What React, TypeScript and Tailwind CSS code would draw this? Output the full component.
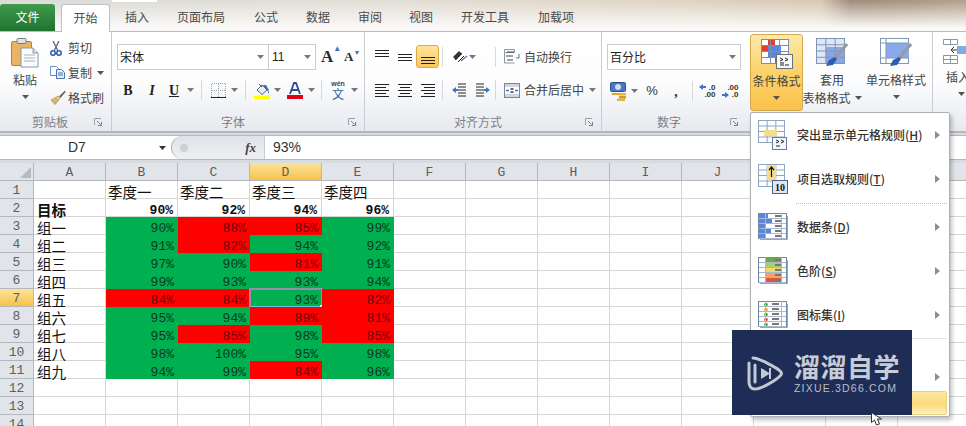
import React from "react";

const Arrow = ({ c = "#555" }: { c?: string }) => (
  <svg width="7" height="4" viewBox="0 0 7 4" className="block shrink-0"><path d="M0 0h7L3.5 4z" fill={c} /></svg>
);

const Sep = () => <div className="w-px h-[20px] bg-[#d5d9de]" />;

const Launcher = () => (
  <svg width="9" height="9" viewBox="0 0 9 9" className="block shrink-0">
    <path d="M0.5 7V0.5H7" fill="none" stroke="#9aa0a8" />
    <path d="M3 3l3.5 3.5M7.5 4v3.5H4" fill="none" stroke="#6f7e90" />
  </svg>
);

const Lines = ({ rows, w = 16 }: { rows: [number, number, number][]; w?: number }) => (
  <svg width={w} height="18" viewBox={`0 0 ${w} 18`} className="block">
    {rows.map(([x, y, l], i) => (
      <rect key={i} x={x} y={y} width={l} height="1" fill="#222" />
    ))}
  </svg>
);

const Paste = () => (
  <svg width="28" height="31" viewBox="0 0 28 31" className="block">
    <rect x="0.5" y="4.5" width="20" height="24" rx="1.5" fill="#e9b565" stroke="#a98446" />
    <rect x="6" y="1.5" width="9" height="5" rx="1" fill="#dfe3e8" stroke="#7d7d7d" />
    <path d="M10 11h12l5 5v14H10z" fill="#fbfbfd" stroke="#8b96a5" />
    <path d="M22 11v5h5" fill="#dde3ea" stroke="#8b96a5" />
    <path d="M13 18h11M13 21h11M13 24h11" stroke="#aab3bf" />
  </svg>
);
const Scissors = () => (
  <svg width="12" height="15" viewBox="0 0 12 15" className="block">
    <path d="M3 0l5 10M9 0L4 10" stroke="#5f6e86" strokeWidth="1.4" fill="none" />
    <circle cx="3" cy="12" r="2.2" fill="none" stroke="#2c5fb0" strokeWidth="1.6" />
    <circle cx="9" cy="12" r="2.2" fill="none" stroke="#2c5fb0" strokeWidth="1.6" />
  </svg>
);
const CopyIcon = () => (
  <svg width="15" height="13" viewBox="0 0 15 13" className="block">
    <path d="M0.5 0.5h6l2 2v7h-8z" fill="#fff" stroke="#6b8fc0" />
    <path d="M6.5 3.5h5l3 3v6h-8z" fill="#e4edf8" stroke="#4a76b0" />
    <path d="M8 7h5M8 9h5" stroke="#4a76b0" />
  </svg>
);
const Brush = () => (
  <svg width="16" height="15" viewBox="0 0 16 15" className="block">
    <path d="M15 0.5l-6 6 1.5 1.5 5-6z" fill="#6b5b4a" />
    <path d="M8.5 6L1 10l4 4.5 5.5-7z" fill="#e8c77a" stroke="#9c8246" strokeWidth="0.7" />
    <path d="M3 10l3 3M5 8.5l3 3" stroke="#9c8246" strokeWidth="0.7" />
  </svg>
);
const Borders = () => (
  <svg width="15" height="15" viewBox="0 0 15 15" className="block">
    <path d="M1 .5h13M.5 1v13M14.5 1v13M7.5 1v13M1 7.5h13" stroke="#9ca3ad" strokeDasharray="1 1" fill="none" />
    <path d="M0 14.5h15" stroke="#222" />
  </svg>
);
const Fill = () => (
  <svg width="17" height="17" viewBox="0 0 17 17" className="block">
    <path d="M3 8l5-5 5 5-5 4.500z" fill="#e8ecf2" stroke="#5c6470" />
    <path d="M5 2l3 3" stroke="#5c6470" />
    <path d="M9 3h3l3 5-2 1z" fill="#3d6fb5" />
    <path d="M14 8c1 1.500 1.500 3 .8 3.500-.8-.5-1.200-2-.8-3.500z" fill="#3d6fb5" />
    <rect x="0" y="13.500" width="16" height="3.500" fill="#ffff00" />
  </svg>
);
const FontColor = () => (
  <svg width="16" height="17" viewBox="0 0 16 17" className="block">
    <path d="M3 12L7 1h2l4 11M5 8h6" fill="none" stroke="#2a4f8f" strokeWidth="1.800" />
    <rect y="13" width="16" height="4" fill="#e00010" />
  </svg>
);
const Orient = () => (
  <svg width="16" height="15" viewBox="0 0 16 15" className="block">
    <path d="M1 8l6-6 3 3-6 6z" fill="#333" />
    <path d="M3 11l7-7M6 13l6-6" stroke="#222" />
    <path d="M9 12l6-5" stroke="#5579ad" strokeWidth="1.300" />
  </svg>
);
const Indent = ({ flip }: { flip?: boolean }) => (
  <svg width="15" height="15" viewBox="0 0 15 15" className={flip ? "block -scale-x-100" : "block"}>
    <path d="M6 1h8M6 4h8M6 7h8M6 10h8M6 13h8" stroke="#222" />
    <path d="M0 7l4-3v2h2v2H4v2z" fill="#3f72c0" />
  </svg>
);
const Wrap = () => (
  <svg width="16" height="15" viewBox="0 0 16 15" className="block">
    <path d="M.5 .5h10v3H.5zM.5 4v10h10" fill="#fff" stroke="#8a94a2" />
    <path d="M3 3h7M3 11h6M2 7h7" stroke="#444" />
    <path d="M15 5v4h-3" fill="none" stroke="#3f72c0" />
  </svg>
);
const Merge = () => (
  <svg width="16" height="15" viewBox="0 0 16 15" className="block">
    <rect x=".5" y=".5" width="15" height="14" fill="#cdd6e2" stroke="#7b8796" />
    <rect x="1" y="4" width="14" height="7" fill="#fff" />
    <path d="M2 7.500h3M11 7.500h3" stroke="#3f72c0" strokeWidth="1.500" />
    <path d="M6.500 6h3M6.500 9h3" stroke="#333" strokeWidth="1.500" />
  </svg>
);
const Money = () => (
  <svg width="17" height="19" viewBox="0 0 17 19" className="block">
    <rect x="0.500" y="0.500" width="15" height="9" rx="1" fill="#4a78c0" stroke="#2f538f" />
    <ellipse cx="8" cy="5" rx="3" ry="3" fill="#cfe0f5" />
    <rect x="2" y="11" width="7" height="2" fill="#dba52c" />
    <rect x="9" y="11" width="7" height="2.500" fill="#e3b33c" />
    <rect x="9" y="14" width="7" height="2.500" fill="#cf9a25" />
    <rect x="7" y="16.500" width="8" height="2.500" fill="#e3b33c" />
  </svg>
);
const Decimal = ({ inc }: { inc?: boolean }) => (
  <div className="relative w-[17px] h-[15px] font-['Liberation_Sans',sans-serif] font-bold text-[8px] leading-[7px] text-[#333] text-right">
    <div>{inc ? ".00" : ".0"}</div>
    <div>{inc ? ".0" : ".00"}</div>
    <svg width="7" height="6" viewBox="0 0 7 6" className={inc ? "absolute left-0 top-[8px]" : "absolute left-0 top-0"}>
      <path d={inc ? "M7 3L3 0v2H0v2h3v2z" : "M0 3l4-3v2h3v2H4v2z"} fill="#3f72c0" />
    </svg>
  </div>
);

const TableGrid = ({ x = 0, y = 0, w = 27, h = 24, c = "#8aa0bd", bg = "#fff" }: any) => (
  <g>
    <rect x={x + 0.5} y={y + 0.5} width={w} height={h} fill={bg} stroke={c} />
    {[1, 2, 3].map((i) => (
      <path key={"v" + i} d={`M${x + 0.5 + (w * i) / 3} ${y}v${h}`} stroke={c} />
    ))}
    {[1, 2, 3].map((i) => (
      <path key={"h" + i} d={`M${x} ${y + 0.5 + (h * i) / 4}h${w}`} stroke={c} />
    ))}
  </g>
);

const CondFormat = () => (
  <svg width="32" height="30" viewBox="0 0 32 30" className="block">
    <rect x=".5" y=".5" width="27" height="24" fill="#fff" />
    <rect x="7" y="1" width="7" height="6" fill="#e2402c" />
    <rect x="7" y="7" width="13" height="11" fill="#5c86dc" />
    <rect x="1" y="7" width="6" height="6" fill="#e2402c" />
    <rect x="14" y="18" width="6" height="6" fill="#e2402c" />
    <TableGrid c="#7d8fa8" bg="none" />
    <rect x="15.500" y="15.500" width="16" height="14" fill="#f8f8fa" stroke="#6b6f78" />
    <path d="M19 19l3 1.500-3 1.500M19 24h4M24 19l3 1.500-3 1.500M24 26h4M19 26h4" fill="none" stroke="#222" />
  </svg>
);
const TableStyle = () => (
  <svg width="32" height="30" viewBox="0 0 32 30" className="block">
    <rect x=".5" y=".5" width="28" height="25" fill="#dfe6f5" />
    <rect x="10" y="9" width="19" height="16" fill="#8aa6e4" />
    <TableGrid w={28} h={25} c="#8096b4" bg="none" />
    <path d="M31 6L19 20" stroke="#9a9a9a" strokeWidth="3" />
    <path d="M19 19l-6 3-3 6 7-1 4-6z" fill="#2d5cb4" />
  </svg>
);
const CellStyle = () => (
  <svg width="32" height="30" viewBox="0 0 32 30" className="block">
    <rect x=".5" y=".5" width="28" height="25" fill="#fff" stroke="#8096b4" />
    <rect x="6" y="5" width="23" height="15" fill="#8aa8ea" />
    <path d="M6 0v26M0 5h29M0 20h29" stroke="#8096b4" />
    <path d="M31 6L19 20" stroke="#9a9a9a" strokeWidth="3" />
    <path d="M19 19l-6 3-3 6 7-1 4-6z" fill="#2d5cb4" />
  </svg>
);
const InsertIcon = () => (
  <svg width="24" height="26" viewBox="0 0 24 26" className="block shrink-0">
    <path d="M.5 .5h14v5h-14zM7.500 .5v5M.5 16.500h14v8h-14zM.5 20.500h14M7.500 16.500v8" fill="#fff" stroke="#8a96a6" />
    <rect x="14" y="7" width="10" height="8" fill="#86a8e8" />
    <path d="M14 11H8M11 8l-3 3 3 3" fill="none" stroke="#333" />
  </svg>
);

const MenuRule = ({ variant }: { variant: number }) => {
  if (variant === 0)
    return (
      <svg width="30" height="30" viewBox="0 0 30 30" className="block">
        <TableGrid w={26} h={22} c="#8ea6c4" />
        <rect x="6" y="10" width="13" height="6" fill="#f3dc8a" />
        <rect x="14.500" y="17.500" width="14" height="12" fill="#f4f6f9" stroke="#657da0" />
        <path d="M18 20l3 1.500-3 1.500M18 26h4M23 20l3 1.500-3 1.500" fill="none" stroke="#222" />
      </svg>
    );
  if (variant === 1)
    return (
      <svg width="30" height="30" viewBox="0 0 30 30" className="block">
        <TableGrid w={26} h={22} c="#8ea6c4" />
        <rect x="9" y="1" width="9" height="15" fill="#f3dc8a" />
        <path d="M13.500 13V3M11 6l2.500-3L16 6" fill="none" stroke="#111" strokeWidth="1.200" />
        <rect x="14.500" y="16.500" width="15" height="13" fill="#dfe6f0" stroke="#4d6484" />
        <text x="22" y="27" fontSize="10" fontWeight="700" textAnchor="middle" fontFamily="Liberation Serif" fill="#111">10</text>
      </svg>
    );
  const bars = variant === 2;
  const colours = ["#6aa84f", "#a8cf6a", "#f2d86a", "#f3a45a", "#d9554a"];
  return (
    <svg width="30" height="28" viewBox="0 0 30 28" className="block">
      <rect x=".5" y=".5" width="28" height="25" fill="#fff" stroke="#6f87a8" />
      {[0, 1, 2, 3, 4].map((i) => (
        <g key={i}>
          {bars && <rect x="1" y={1 + i * 5} width={[9, 13, 7, 12, 6][i]} height="4" fill="#5c86dc" />}
          {variant === 3 && <rect x="8" y={1 + i * 5} width="15" height="5" fill={colours[i]} />}
          {variant === 4 && <circle cx="8" cy={3.500 + i * 5} r="1.800" fill={["#2fa84f", "#e8a52c", "#2fa84f", "#d9463a", "#2fa84f"][i]} />}
          <rect x={variant === 4 ? 14 : 17} y={2 + i * 5} width="7" height="2" fill="#777" />
          <path d={`M1 ${5.500 + i * 5}h27`} stroke="#a9b8cc" />
        </g>
      ))}
      <path d="M7.500 0v26M23.500 0v26" stroke="#a9b8cc" />
      <path d="M2 26.500h27.500V3" fill="none" stroke="#9aa6b6" />
    </svg>
  );
};

const MenuArrow = () => (
  <svg width="5" height="8" viewBox="0 0 5 8" className="block shrink-0"><path d="M0 0l5 4-5 4z" fill="#8a8f96" /></svg>
);

const MenuItem = ({ v, label, k }: { v: number; label: string; k: string }) => (
  <div className="h-[44px] flex items-center pl-[7px] pr-[9px] shrink-0">
    <div className="w-[31px] h-[30px] flex items-center shrink-0"><MenuRule variant={v} /></div>
    <div className="ml-[8px] flex-1 text-[12px] font-medium text-[#333] whitespace-nowrap">
      {label}(<span className="underline">{k}</span>)
    </div>
    <MenuArrow />
  </div>
);

const GroupLabel = ({ text, cls }: { text: string; cls: string }) => (
  <div className={`h-[20px] pt-[2px] flex items-center text-[12px] text-[#7c8087] ${cls}`}>
    <div className="flex-1 text-center">{text}</div>
    <Launcher />
  </div>
);

const Tab = ({ t, cls }: { t: string; cls: string }) => (
  <div className={`h-full pb-[1px] flex items-center justify-center text-[12px] text-[#4a4a4a] ${cls}`}>{t}</div>
);

const cols = ["B", "C", "D", "E"];
const data: [string, number[]][] = [
  ["组一", [90, 88, 85, 99]],
  ["组二", [91, 82, 94, 92]],
  ["组三", [97, 90, 81, 91]],
  ["组四", [99, 93, 93, 94]],
  ["组五", [84, 84, 93, 82]],
  ["组六", [95, 94, 89, 81]],
  ["组七", [95, 85, 98, 85]],
  ["组八", [98, 100, 95, 98]],
  ["组九", [94, 99, 84, 96]],
];
const letters = ["A", "B", "C", "D", "E", "F", "G", "H", "I", "J", "K", "L", "M"];

const Cell = ({ children, cls = "" }: { children?: React.ReactNode; cls?: string }) => (
  <div className={`border-r border-b border-[#d6d6d6] overflow-visible whitespace-nowrap leading-[21px] ${cls}`}>{children}</div>
);
const RowHead = ({ n }: { n: number }) => (
  <div className={`border-r border-b border-[#b4b8be] text-center text-[13px] leading-[20px] font-['Liberation_Mono',monospace] text-[#5e5e5e] ${n === 7 ? "bg-gradient-to-b from-[#fbe39a] to-[#f7c244]" : "bg-[#e1e4e8]"}`}>{n}</div>
);
const Empty = ({ n }: { n: number }) => (
  <>
    {Array.from({ length: n }).map((_, i) => <Cell key={i} />)}
  </>
);

const pct = "font-['Liberation_Mono',monospace] text-[13px] leading-[23px] text-right pr-[4px]";

export default function App() {
  return (
    <div className="relative w-[966px] h-[426px] overflow-hidden bg-white font-['Noto_Sans_CJK_SC','Liberation_Sans',sans-serif] flex flex-col">
      {/* title + tabs */}
      <div className="relative h-[32px] shrink-0 flex items-end pt-[4px] border-b border-[#b9bdc3] bg-[linear-gradient(180deg,rgba(250,249,247,0)_5%,rgba(250,249,247,0.55)_50%,#faf9f8_90%),linear-gradient(90deg,#dcdcd8_0%,#e2dfd6_40%,#dfd5c4_70%,#d8c9b4_85%,#a49080_88%,#a8937f_92%,#b5a391_100%)]">
        <div className="absolute left-[112px] top-0 w-[45px] h-[2px] bg-white" />
        <div className="w-[55px] h-[27px] pb-[1px] rounded-t-[3px] bg-gradient-to-b from-[#3f9a4c] to-[#1f7330] text-white text-[12px] flex items-center justify-center">文件</div>
        <div className="w-[6px]" />
        <div className="w-[49px] h-[28px] pb-[1px] -mb-px rounded-t-[3px] bg-white border border-b-0 border-[#bcc0c6] flex items-center justify-center text-[12px] text-[#4a4a4a]">开始</div>
        <div className="h-[27px] flex">
          <Tab t="插入" cls="w-[54px]" />
          <Tab t="页面布局" cls="w-[74px]" />
          <Tab t="公式" cls="w-[56px]" />
          <Tab t="数据" cls="w-[48px]" />
          <Tab t="审阅" cls="w-[56px]" />
          <Tab t="视图" cls="w-[46px]" />
          <Tab t="开发工具" cls="w-[82px]" />
          <Tab t="加载项" cls="w-[60px]" />
        </div>
      </div>

      {/* ribbon */}
      <div className="h-[101px] shrink-0 flex border-b-2 border-[#b4b8be] bg-gradient-to-b from-white via-[#fdfdfe] to-[#e6e9ee] text-[12px] text-[#444]">
        {/* clipboard */}
        <div className="w-[112px] shrink-0 flex flex-col border-r border-[#c9cdd3]">
          <div className="flex-1 flex pl-[11px]">
            <div className="w-[28px] flex flex-col items-center pt-[5px]">
              <Paste />
              <div className="mt-[3px] leading-[18px]">粘贴</div>
              <div className="mt-[6px]"><Arrow /></div>
            </div>
            <div className="ml-[11px] flex flex-col pt-[4px]">
              <div className="h-[24px] flex items-center"><div className="w-[18px]"><Scissors /></div>剪切</div>
              <div className="h-[25px] flex items-center"><div className="w-[18px]"><CopyIcon /></div>复制<div className="ml-[5px]"><Arrow /></div></div>
              <div className="h-[25px] flex items-center"><div className="w-[18px]"><Brush /></div>格式刷</div>
            </div>
          </div>
          <GroupLabel text="剪贴板" cls="pl-[6px] pr-[8px]" />
        </div>

        {/* font */}
        <div className="w-[253px] shrink-0 flex flex-col border-r border-[#c9cdd3]">
          <div className="flex-1 pt-[12px] pl-[5px]">
            <div className="h-[26px] flex items-center">
              <div className="w-[152px] h-full pb-[1px] bg-white border border-[#c9cdd3] flex items-center pl-[2px] pr-[4px] text-[#222]"><div className="flex-1">宋体</div><Arrow c="#777" /></div>
              <div className="w-[47px] h-full pb-[1px] bg-white border border-l-0 border-[#c9cdd3] flex items-center pl-[3px] pr-[4px] font-['Liberation_Sans',sans-serif] text-[#222]"><div className="flex-1">11</div><Arrow c="#777" /></div>
              <div className="ml-[5px] w-[20px] font-['Liberation_Serif',serif] font-bold text-[17px] text-[#2a2a2a] flex">A<span className="text-[8px] leading-[9px] text-[#3f72c0]">▲</span></div>
              <div className="ml-[3px] w-[20px] font-['Liberation_Serif',serif] font-bold text-[13px] text-[#2a2a2a] flex items-end">A<span className="text-[7px] leading-[12px] self-start text-[#3f72c0]">▼</span></div>
            </div>
            <div className="-ml-[1px] mt-[9px] h-[22px] flex items-center">
              <div className="w-[24px] text-center font-['Liberation_Serif',serif] font-bold text-[14px] text-[#222]">B</div>
              <div className="w-[24px] text-center font-['Liberation_Serif',serif] font-bold italic text-[14px] text-[#222]">I</div>
              <div className="w-[20px] text-center font-['Liberation_Serif',serif] font-bold underline text-[14px] text-[#222]">U</div>
              <div className="w-[12px] flex justify-center"><Arrow c="#777" /></div>
              <div className="w-[10px] flex justify-center"><Sep /></div>
              <div className="w-[24px] flex justify-center"><Borders /></div>
              <div className="w-[8px] flex justify-center"><Arrow c="#777" /></div>
              <div className="w-[14px] flex justify-center"><Sep /></div>
              <div className="w-[20px] flex justify-center"><Fill /></div>
              <div className="w-[10px] flex justify-center"><Arrow c="#777" /></div>
              <div className="w-[26px] flex justify-center"><FontColor /></div>
              <div className="w-[6px] flex justify-center"><Arrow c="#777" /></div>
              <div className="w-[14px] flex justify-center"><Sep /></div>
              <div className="w-[20px] h-[20px] flex flex-col items-center text-[#2c5fa8]">
                <span className="h-[7px] text-[7px] leading-[7px] font-bold text-[#444] font-['Liberation_Sans',sans-serif]">wén</span>
                <span className="h-[13px] text-[12px] leading-[13px]">文</span>
              </div>
              <div className="w-[12px] flex justify-center"><Arrow c="#777" /></div>
            </div>
          </div>
          <GroupLabel text="字体" cls="pl-[6px] pr-[7px]" />
        </div>

        {/* alignment */}
        <div className="w-[237px] shrink-0 flex flex-col border-r border-[#c9cdd3]">
          <div className="flex-1 pt-[13px] pl-[5px]">
            <div className="h-[23px] flex items-center">
              <div className="w-[23px] flex justify-center"><Lines rows={[[1, 2, 14], [1, 5, 14], [1, 8, 14]]} /></div>
              <div className="w-[23px] flex justify-center"><Lines rows={[[1, 6, 14], [1, 9, 14], [1, 12, 14]]} /></div>
              <div className="w-[23px] h-[23px] flex justify-center items-center rounded-[3px] border border-[#d9a94a] bg-gradient-to-b from-[#fde49a] to-[#fbc85a]"><Lines rows={[[1, 9, 14], [1, 12, 14], [1, 15, 14]]} /></div>
              <div className="w-[6px] flex justify-center"><Sep /></div>
              <div className="w-[50px] pl-[7px] flex items-center gap-[1px]"><Orient /><Arrow c="#777" /></div>
              <div className="w-[9px] flex"><Sep /></div>
              <div className="w-[20px]"><Wrap /></div>
              <div className="text-[#444]">自动换行</div>
            </div>
            <div className="mt-[11px] h-[22px] flex items-center">
              <div className="w-[23px] flex justify-center"><Lines rows={[[1, 3, 14], [1, 6, 11], [1, 9, 14], [1, 12, 11], [1, 15, 14]]} /></div>
              <div className="w-[23px] flex justify-center"><Lines rows={[[1, 3, 14], [3, 6, 10], [1, 9, 14], [3, 12, 10], [1, 15, 14]]} /></div>
              <div className="w-[23px] flex justify-center"><Lines rows={[[1, 3, 14], [4, 6, 11], [1, 9, 14], [4, 12, 11], [1, 15, 14]]} /></div>
              <div className="w-[6px] flex justify-center"><Sep /></div>
              <div className="w-[25px] pl-[7px]"><Indent /></div>
              <div className="w-[25px] pl-[5px]"><Indent flip /></div>
              <div className="w-[9px] flex"><Sep /></div>
              <div className="w-[20px]"><Merge /></div>
              <div className="text-[#444]">合并后居中</div>
              <div className="ml-[5px]"><Arrow c="#777" /></div>
            </div>
          </div>
          <GroupLabel text="对齐方式" cls="pl-[6px] pr-[7px]" />
        </div>

        {/* number */}
        <div className="w-[148px] shrink-0 flex flex-col">
          <div className="flex-1 pt-[12px] pl-[5px]">
            <div className="w-[134px] h-[26px] pb-[1px] bg-white border border-[#c9cdd3] flex items-center pl-[2px] pr-[4px] text-[#222]"><div className="flex-1">百分比</div><Arrow c="#777" /></div>
            <div className="mt-[10px] h-[22px] flex items-center">
              <div className="w-[20px] pl-[3px]"><Money /></div>
              <div className="w-[14px] flex justify-center"><Arrow c="#777" /></div>
              <div className="w-[22px] text-center text-[13px] font-['Liberation_Sans',sans-serif] text-[#333]">%</div>
              <div className="w-[26px] text-center text-[14px] font-bold font-['Liberation_Serif',serif] text-[#333]">,</div>
              <div className="w-[6px] flex justify-center"><Sep /></div>
              <div className="w-[24px] flex justify-center"><Decimal /></div>
              <div className="w-[22px] flex justify-center"><Decimal inc /></div>
            </div>
          </div>
          <GroupLabel text="数字" cls="pl-[6px] pr-[11px]" />
        </div>

        {/* styles */}
        <div className="w-[183px] shrink-0 flex border-r border-[#c9cdd3] text-[#444]">
          <div className="mt-[2px] w-[53px] h-[77px] rounded-[3px] border border-[#d6a84e] bg-gradient-to-b from-[#fde9a8] via-[#fbd269] to-[#fbc24c] flex flex-col items-center pt-[4px]">
            <CondFormat />
            <div className="mt-[3px] leading-[18px] whitespace-nowrap">条件格式</div>
            <div className="mt-[6px]"><Arrow /></div>
          </div>
          <div className="ml-[1px] mt-[2px] w-[56px] flex flex-col items-center pt-[4px]">
            <TableStyle />
            <div className="mt-[3px] leading-[18px]">套用</div>
            <div className="flex items-center whitespace-nowrap leading-[17px]">表格格式<div className="ml-[4px]"><Arrow /></div></div>
          </div>
          <div className="w-[72px] mt-[2px] flex flex-col items-center pt-[4px]">
            <CellStyle />
            <div className="mt-[3px] leading-[18px] whitespace-nowrap">单元格样式</div>
            <div className="mt-[6px]"><Arrow /></div>
          </div>
        </div>
        <div className="pl-[10px] pt-[7px] flex flex-col overflow-hidden">
          <InsertIcon />
          <div className="mt-[3px] pl-[3px] leading-[18px] whitespace-nowrap">插入</div>
          <div className="mt-[6px] pl-[15px]"><Arrow /></div>
        </div>
      </div>

      {/* formula bar */}
      <div className="h-[30px] shrink-0 bg-[#d8dbe0] pt-[2px] pb-[3px] flex flex-col">
        <div className="h-[25px] flex bg-white border-y border-[#b4b8be] font-['Liberation_Sans',sans-serif] text-[14px] text-[#333]">
          <div className="w-[171px] flex items-center pl-[68px] pr-[5px]"><div className="flex-1">D7</div><Arrow c="#333" /></div>
          <div className="w-[93px] rounded-l-full bg-gradient-to-b from-[#dfe2e7] to-[#eef0f3] border-l border-[#a9aeb6] flex items-center pl-[8px] pr-[8px]">
            <div className="w-[8px] h-[8px] rounded-full bg-[#cdd1d7]" />
            <div className="flex-1 text-right font-['Liberation_Serif',serif] italic font-bold text-[13px] text-[#444]">fx</div>
          </div>
          <div className="flex-1 border-l border-[#c9cdd3] flex items-center pl-[8px]">93%</div>
        </div>
      </div>

      {/* sheet */}
      <div className="flex-1 overflow-hidden grid grid-cols-[34px_repeat(13,72px)] auto-rows-[18px] text-[14.500px] text-[#111]">
        <div className="bg-[#e1e4e8] border-r border-b border-[#b4b8be] flex items-end justify-end pr-[2px] pb-[2px]">
          <svg width="11" height="11" viewBox="0 0 11 11" className="block"><path d="M11 0v11H0z" fill="#b6bbc2" /></svg>
        </div>
        {letters.map((l) => (
          <div key={l} className={`border-r border-b border-[#b4b8be] text-center font-['Liberation_Mono',monospace] text-[13px] leading-[20px] text-[#5e5e5e] ${l === "D" ? "bg-gradient-to-b from-[#fbe39a] to-[#f7c244]" : "bg-[#e1e4e8]"}`}>{l}</div>
        ))}

        <RowHead n={1} />
        <Cell />
        <Cell cls="pl-[2px]">季度一</Cell>
        <Cell cls="pl-[2px]">季度二</Cell>
        <Cell cls="pl-[2px]">季度三</Cell>
        <Cell cls="pl-[2px]">季度四</Cell>
        <Empty n={8} />

        <RowHead n={2} />
        <Cell cls="pl-[3px] font-bold">目标</Cell>
        {[90, 92, 94, 96].map((v) => (
          <Cell key={v} cls={`${pct} font-bold`}>{v}%</Cell>
        ))}
        <Empty n={8} />

        {data.map(([name, vals], i) => (
          <React.Fragment key={name}>
            <RowHead n={i + 3} />
            <Cell cls="pl-[3px]">{name}</Cell>
            {vals.map((v, j) => {
              const selected = i === 4 && j === 2;
              const red = v < 90;
              return (
                <div
                  key={cols[j]}
                  className={`relative ${pct} ${red ? "bg-[#ff0000] text-[#6e0808]" : "bg-[#00b050] text-[#0b3a20]"}`}
                >
                  {v}%
                  {selected && (
                    <>
                      <div className="absolute -left-px -top-px -right-px -bottom-px border-2 border-[#9a8cb0] border-b-[#62c6dc]" />
                      <div className="absolute -right-[3px] -bottom-[3px] w-[5px] h-[5px] bg-[#38c4d8] border border-white" />
                    </>
                  )}
                </div>
              );
            })}
            <Empty n={8} />
          </React.Fragment>
        ))}

        {[12, 13, 14].map((n) => (
          <React.Fragment key={n}>
            <RowHead n={n} />
            <Empty n={13} />
          </React.Fragment>
        ))}
      </div>

      {/* dropdown menu */}
      <div className="absolute left-[750px] top-[112px] w-[200px] h-[305px] bg-white border border-[#aab0b8] rounded-[2px] shadow-[2px_3px_4px_rgba(0,0,0,0.25)] flex flex-col">
        <MenuItem v={0} label="突出显示单元格规则" k="H" />
        <MenuItem v={1} label="项目选取规则" k="T" />
        <div className="mt-[2px] h-[2px] ml-[45px] mr-[2px] border-t border-dotted border-[#b8bcc2] shrink-0" />
        <MenuItem v={2} label="数据条" k="D" />
        <MenuItem v={3} label="色阶" k="S" />
        <MenuItem v={4} label="图标集" k="I" />
        <div className="h-[26px] shrink-0 pt-[1px] pl-[45px] pr-[2px]"><div className="border-t border-[#dfe2e6]" /></div>
        <div className="h-[28px] flex items-center justify-end pr-[9px] shrink-0"><MenuArrow /></div>
        <div className="mx-[2px] h-[24px] rounded-[2px] border border-[#e6d184] bg-[linear-gradient(180deg,#fde7a0_0%,#fcd97c_55%,#fff0c0_100%)] shrink-0" />
      </div>

      {/* watermark */}
      <div className="absolute left-[732px] top-[330px] w-[180px] h-[85px] bg-[#1e2d55] flex items-center pl-[15px]">
        <svg width="36" height="38" viewBox="0 0 36 38" className="block shrink-0">
          <path d="M6 4C12 4 30 14 33 17c2 2 2 3 0 5C28 27 14 35 8 35c-4 0-6-3-6-7V9" fill="none" stroke="#c3c8d3" strokeWidth="3" strokeLinecap="round" />
          <path d="M8 11v17" stroke="#c3c8d3" strokeWidth="3" strokeLinecap="round" />
          <path d="M14 14l9 5.500-9 5.500z" fill="#c3c8d3" />
          <path d="M23 14v11" stroke="#c3c8d3" strokeWidth="2" />
        </svg>
        <div className="ml-[11px] flex flex-col items-start">
          <div className="text-[26px] font-bold leading-[30px] text-[#c8ccd6] tracking-[0.5px] whitespace-nowrap">溜溜自学</div>
          <div className="text-[10.500px] leading-[12px] mt-[1px] text-[#b9bec9] tracking-[1.200px] whitespace-nowrap font-['Liberation_Sans',sans-serif]">ZIXUE.3D66.COM</div>
        </div>
      </div>

      {/* pointer */}
      <svg width="12" height="14" viewBox="0 0 12 14" className="absolute left-[871px] top-[412px]">
        <path d="M.5 .5v10l3-2.500 2 5 3-1-2-5h4z" fill="#fff" stroke="#333" />
      </svg>
    </div>
  );
}
